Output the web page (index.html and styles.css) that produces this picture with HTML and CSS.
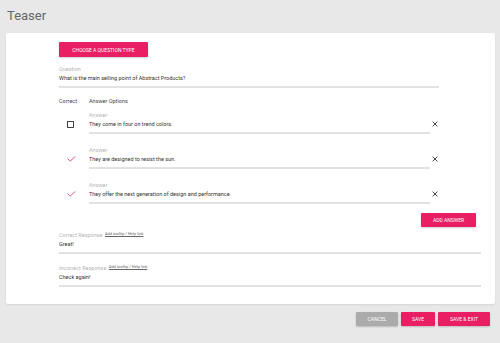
FILE: index.html
```html
<!DOCTYPE html>
<html lang="en">
  <head>
    <meta charset="UTF-8" />
    <meta name="viewport" content="width=device-width, initial-scale=1.0" />
    <title>Teaser</title>
    <link rel="stylesheet" href="styles.css">
  </head>
  <body>
    <h1 class="page-title">Teaser</h1>

    <div class="card">
      <button class="btn btn-pink btn-type">Choose a question type</button>

      <div class="field field-question">
        <label>Question</label>
        <div class="value">What is the main selling point of Abstract Products?</div>
      </div>

      <div class="options-head">
        <span class="col-correct">Correct</span>
        <span>Answer Options</span>
      </div>

      <div class="answer-row">
        <div class="col-correct">
          <span class="checkbox"></span>
        </div>
        <div class="field field-answer">
          <label>Answer</label>
          <div class="value">They come in four on trend colors.</div>
        </div>
        <span class="remove">
          <svg viewBox="0 0 10 10" width="6" height="6"><path d="M1 1L9 9M9 1L1 9" stroke="#333" stroke-width="1.5" fill="none"/></svg>
        </span>
      </div>

      <div class="answer-row">
        <div class="col-correct">
          <svg class="check" viewBox="0 0 10 7" width="9" height="6"><polyline points="0.5,3 3.5,6 9.5,0.5" stroke="#e23a6f" stroke-width="1" fill="none"/></svg>
        </div>
        <div class="field field-answer">
          <label>Answer</label>
          <div class="value">They are designed to resist the sun.</div>
        </div>
        <span class="remove">
          <svg viewBox="0 0 10 10" width="6" height="6"><path d="M1 1L9 9M9 1L1 9" stroke="#333" stroke-width="1.5" fill="none"/></svg>
        </span>
      </div>

      <div class="answer-row">
        <div class="col-correct">
          <svg class="check" viewBox="0 0 10 7" width="9" height="6"><polyline points="0.5,3 3.5,6 9.5,0.5" stroke="#e23a6f" stroke-width="1" fill="none"/></svg>
        </div>
        <div class="field field-answer">
          <label>Answer</label>
          <div class="value">They offer the next generation of design and performance.</div>
        </div>
        <span class="remove">
          <svg viewBox="0 0 10 10" width="6" height="6"><path d="M1 1L9 9M9 1L1 9" stroke="#333" stroke-width="1.5" fill="none"/></svg>
        </span>
      </div>

      <div class="add-row">
        <button class="btn btn-pink btn-add">Add answer</button>
      </div>

      <div class="field field-response">
        <label>Correct Response <a href="#" class="help">Add tooltip / Help link</a></label>
        <div class="value">Great!</div>
      </div>

      <div class="field field-response field-last">
        <label>Incorrect Response <a href="#" class="help">Add tooltip / Help link</a></label>
        <div class="value">Check again!</div>
      </div>
    </div>

    <div class="actions">
      <button class="btn btn-gray">Cancel</button>
      <button class="btn btn-pink">Save</button>
      <button class="btn btn-pink btn-exit">Save &amp; Exit</button>
    </div>
  </body>
</html>
```

FILE: styles.css
```css
* {
  margin: 0;
  padding: 0;
  box-sizing: border-box;
}

body {
  font-family: Roboto, "Liberation Sans", sans-serif;
  background-color: #e8e8e8;
  color: #333;
  padding-top: 8px;
  width: 500px;
  height: 343px;
  overflow: hidden;
}

.page-title {
  font-size: 13px;
  font-weight: 400;
  line-height: 16px;
  color: #666;
  margin-left: 7px;
  margin-bottom: 9px;
}

.card {
  background-color: #fff;
  margin-left: 6px;
  width: 489px;
  border-radius: 2px;
  box-shadow: 0 1px 2px rgba(0, 0, 0, 0.08);
  padding: 9px 0 17px 53px;
}

.btn {
  display: block;
  border: none;
  font-family: Roboto, "Liberation Sans", sans-serif;
  font-size: 5px;
  text-transform: uppercase;
  color: #fff;
  height: 14px;
  border-radius: 1px;
  box-shadow: 0 1px 2px rgba(0, 0, 0, 0.2);
  cursor: pointer;
}

.btn-pink {
  background-color: #ea1e63;
}

.btn-gray {
  background-color: #ababab;
  width: 42px;
}

.btn-type {
  width: 89px;
  height: 15px;
}

.field label {
  display: block;
  font-size: 5.5px;
  line-height: 8px;
  color: #b5b5b5;
}

.field .value {
  font-size: 5.5px;
  line-height: 10px;
  padding-bottom: 3px;
  border-bottom: 2px solid #e2e2e2;
  color: #333;
}

.field-question {
  margin-top: 8px;
  width: 380px;
}

.options-head {
  display: flex;
  font-size: 5.5px;
  line-height: 8px;
  margin-top: 9px;
  color: #444;
}

.col-correct {
  width: 30px;
  flex-shrink: 0;
}

.answer-row {
  display: flex;
  align-items: flex-end;
  margin-top: 5px;
  height: 24px;
}

.answer-row + .answer-row {
  margin-top: 11px;
}

.answer-row .col-correct {
  height: 20px;
  display: flex;
  align-items: center;
  padding-left: 8px;
}

.checkbox {
  width: 7px;
  height: 7px;
  border: 1px solid #444;
}

.field-answer {
  width: 341px;
}

.remove {
  display: flex;
  align-items: center;
  height: 20px;
  margin-left: 2px;
}

.add-row {
  display: flex;
  justify-content: flex-end;
  width: 417px;
  margin-top: 9px;
}

.btn-add {
  width: 55px;
}

.field-response {
  width: 422px;
  margin-top: 3px;
}

.field-last {
  margin-top: 9px;
}

.help {
  font-size: 4px;
  color: #666;
  text-decoration: underline;
  vertical-align: 2px;
  margin-left: 1px;
}

.actions {
  display: flex;
  justify-content: flex-end;
  gap: 3px;
  width: 490px;
  margin-top: 8px;
}

.actions .btn-pink {
  width: 34px;
}

.actions .btn-exit {
  width: 52px;
}
```
